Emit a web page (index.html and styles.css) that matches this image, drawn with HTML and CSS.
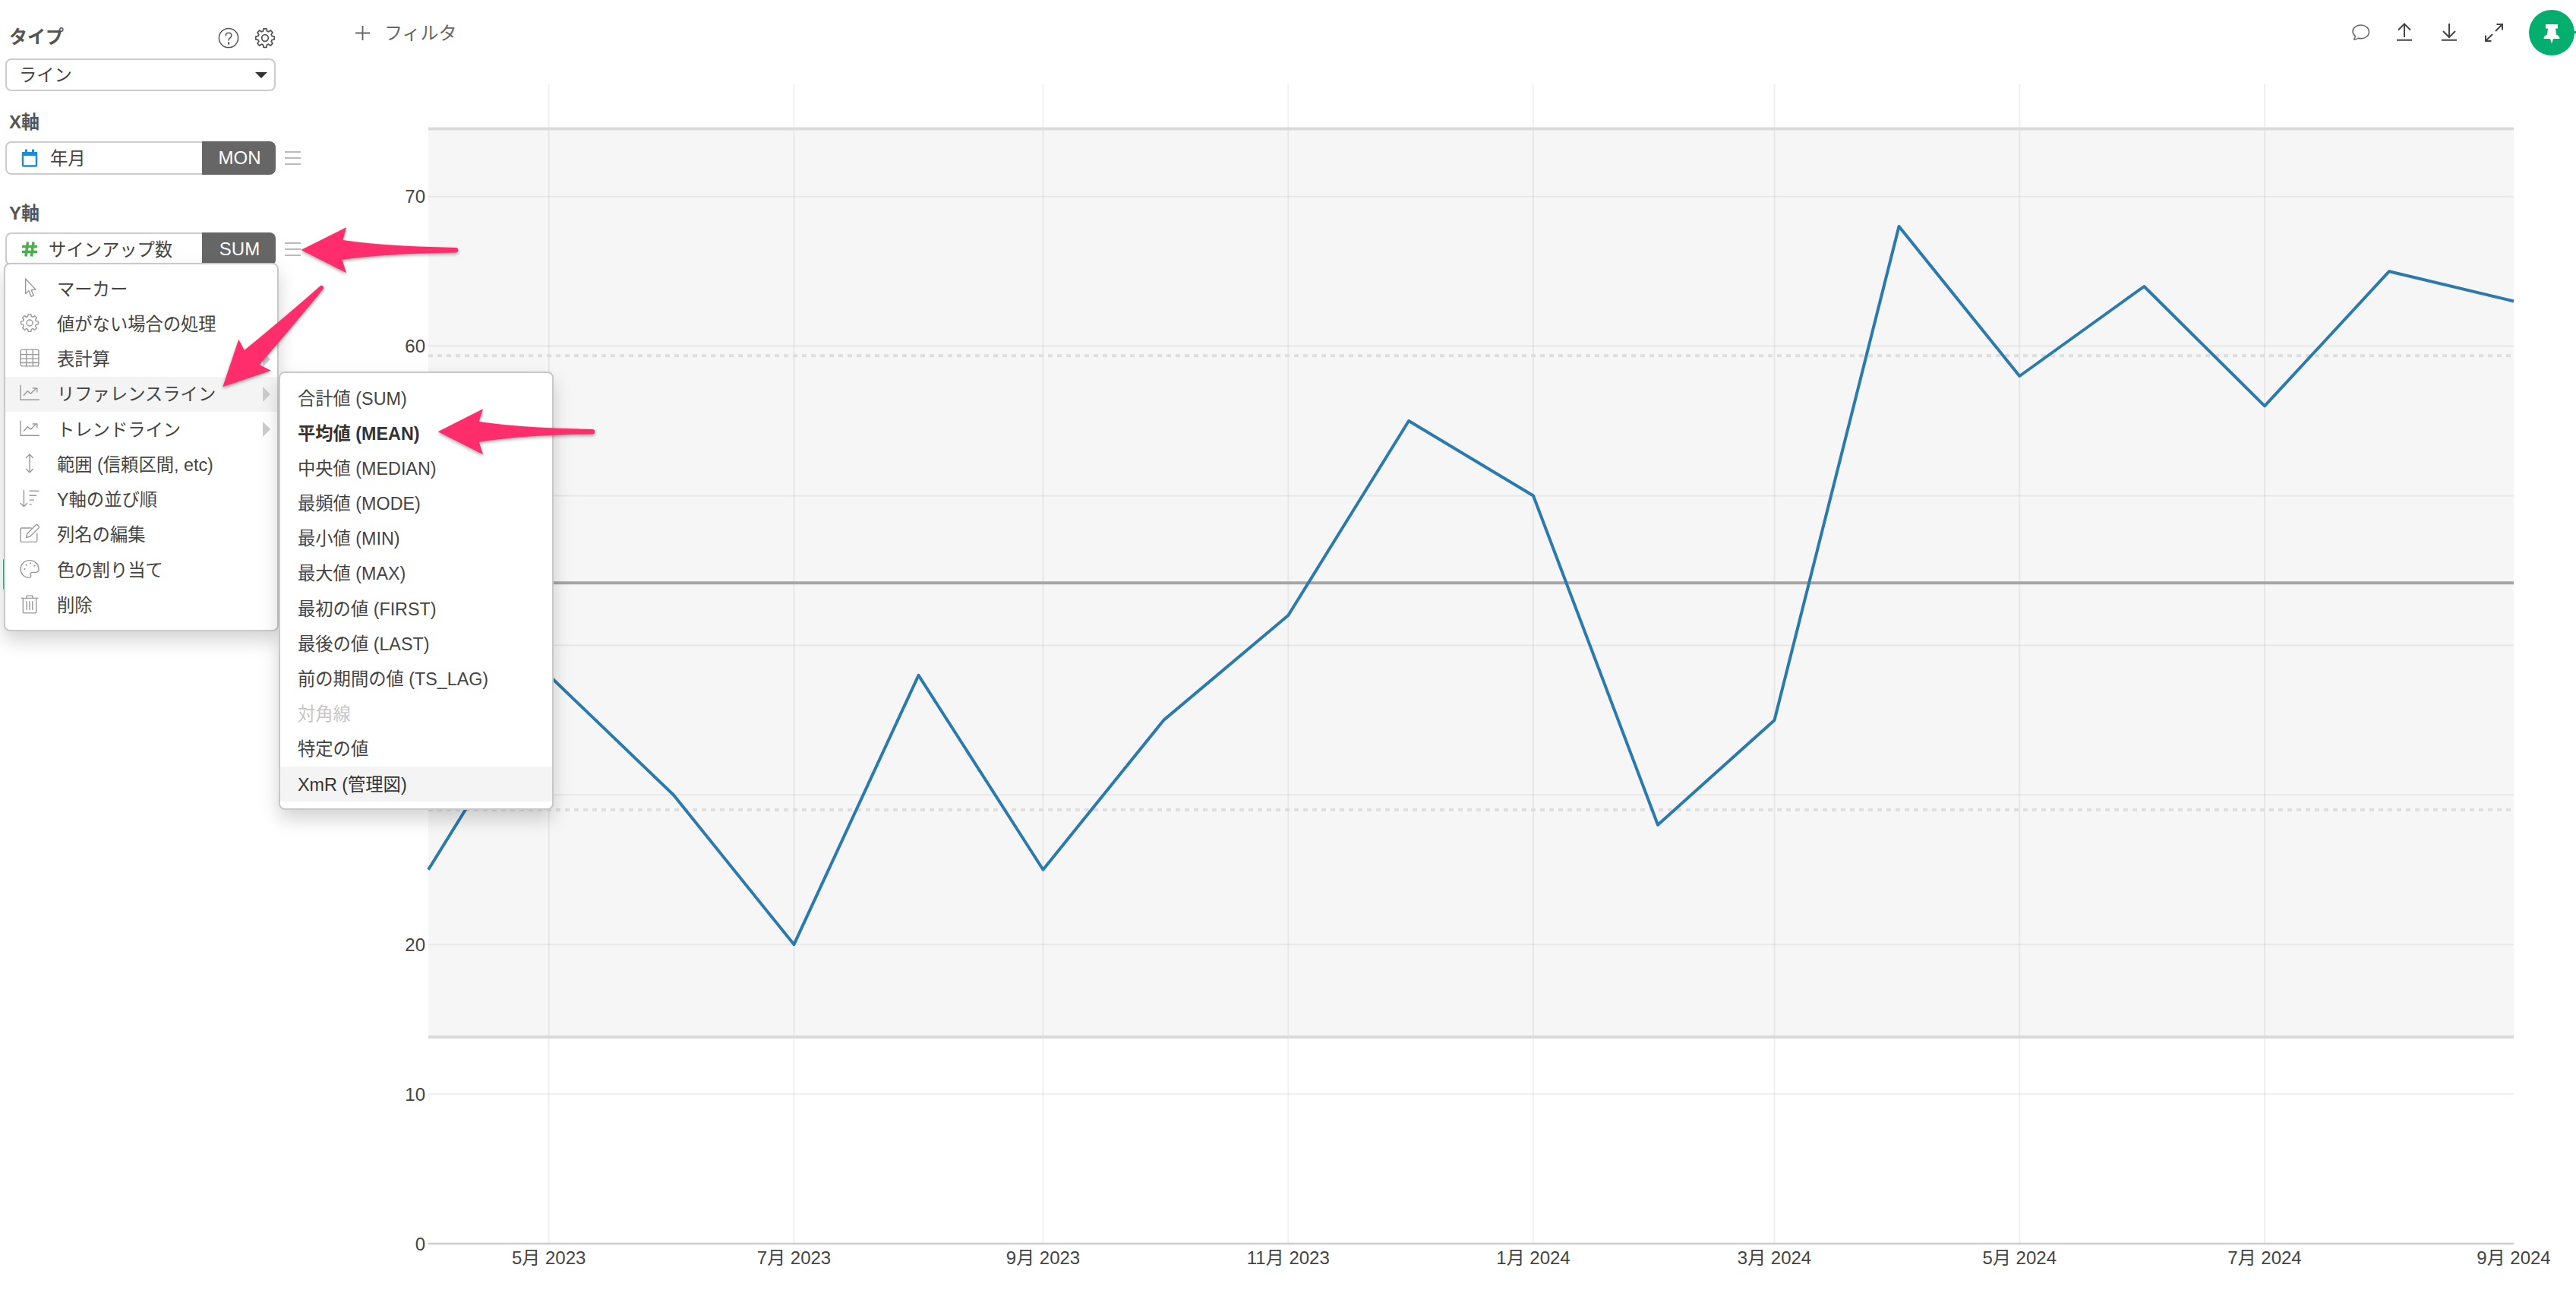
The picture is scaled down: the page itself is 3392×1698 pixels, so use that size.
FILE: index.html
```html
<!DOCTYPE html>
<html lang="ja">
<head>
<meta charset="utf-8">
<title>チャート</title>
<link rel="stylesheet" href="styles.css">
</head>
<body>
<div class="app">
  <aside class="sidebar">
    <div class="head head-type">
      <span>タイプ</span>
      <div class="head-icons">
        <svg class="head-icon" viewBox="0 0 28 28"><circle cx="14" cy="14" r="12.6"/><path d="M10.3 11c0-2.4 1.7-3.8 3.8-3.8s3.8 1.4 3.8 3.5c0 3.2-3.8 3.2-3.8 6.3"/><path class="dot" d="M14.1 20v1.8"/></svg>
        <svg class="head-icon" viewBox="0 0 24 24"><path d="M10.3 1.5h3.4l.5 2.8 1.7.7 2.3-1.6 2.4 2.4-1.6 2.3.7 1.7 2.8.5v3.4l-2.8.5-.7 1.7 1.6 2.3-2.4 2.4-2.3-1.6-1.7.7-.5 2.8h-3.4l-.5-2.8-1.7-.7-2.3 1.6-2.4-2.4 1.6-2.3-.7-1.7-2.8-.5v-3.4l2.8-.5.7-1.7-1.6-2.3 2.4-2.4 2.3 1.6 1.7-.7z"/><circle cx="12" cy="12" r="3.7"/></svg>
      </div>
    </div>
    <div class="select"><span class="select-text">ライン</span><i class="caret"></i></div>

    <div class="head">X軸</div>
    <div class="field-row">
      <div class="field">
        <div class="field-name">
          <svg class="field-icon" viewBox="0 0 22 24"><path class="cal" d="M2 7h18v14.5a1 1 0 0 1-1 1H3a1 1 0 0 1-1-1z"/><path class="cal-top" d="M1 4h20v5H1zM5 0.500h3v4H5zM14 0.500h3v4h-3z"/></svg>
          <span class="field-text">年月</span>
        </div>
        <div class="field-unit">MON</div>
      </div>
      <div class="burger"><i></i><i></i><i></i></div>
    </div>

    <div class="head">Y軸</div>
    <div class="field-row">
      <div class="field">
        <div class="field-name">
          <svg class="field-icon" viewBox="0 0 22 22"><path class="hash" d="M8.500 1.500 6 20.500M16 1.500 13.500 20.500M1 7.500h20M1 14.500h20"/></svg>
          <span class="field-text field-text-y">サインアップ数</span>
        </div>
        <div class="field-unit">SUM</div>
      </div>
      <div class="burger"><i></i><i></i><i></i></div>
    </div>
    <div class="behind-tab"></div>

    <ul class="menu menu-main">
      <li class="row"><svg class="mi" viewBox="0 0 24 24"><path d="M7 1v18l4-3.500 3 7 3-1.300-3-6.700 5.500-.5z"/></svg><span>マーカー</span></li>
      <li class="row"><svg class="mi" viewBox="0 0 24 24"><path d="M10.300 1.500h3.400l.5 2.800 1.700.7 2.300-1.600 2.400 2.400-1.600 2.300.7 1.700 2.800.5v3.400l-2.800.5-.7 1.700 1.600 2.300-2.400 2.400-2.300-1.600-1.700.7-.5 2.800h-3.400l-.5-2.800-1.700-.7-2.300 1.600-2.400-2.400 1.600-2.300-.7-1.700-2.800-.5v-3.400l2.800-.5.7-1.700-1.600-2.300 2.400-2.400 2.300 1.600 1.700-.7z"/><circle cx="12" cy="12" r="3.700"/></svg><span>値がない場合の処理</span></li>
      <li class="row"><svg class="mi" viewBox="0 0 24 24"><rect x="1" y="2" width="22" height="20" rx="2"/><path d="M1 8h22M1 13h22M1 18h22M8 2v20M16 2v20"/></svg><span>表計算</span><i class="chev"></i></li>
      <li class="row row-on"><svg class="mi" viewBox="0 0 24 24"><path d="M1 3v17.500h23"/><path d="M5 15l4.500-5 4 3 6-6"/><path d="M16 6.500h5V11"/></svg><span>リファレンスライン</span><i class="chev"></i></li>
      <li class="row"><svg class="mi" viewBox="0 0 24 24"><path d="M1 3v17.500h23"/><path d="M5 15l4.500-5 4 3 6-6"/><path d="M16 6.500h5V11"/></svg><span>トレンドライン</span><i class="chev"></i></li>
      <li class="row"><svg class="mi" viewBox="0 0 24 24"><path d="M12 1v22M8 5l4-4 4 4M8 19l4 4 4-4"/></svg><span>範囲 (信頼区間, etc)</span></li>
      <li class="row"><svg class="mi" viewBox="0 0 24 24"><path d="M5 2v20M1 18l4 4 4-4"/><path d="M12 3h11M12 8.500h8M12 14h5M12 19.500h2"/></svg><span>Y軸の並び順</span></li>
      <li class="row"><svg class="mi" viewBox="0 0 24 24"><path d="M21 12v9a1.500 1.500 0 0 1-1.500 1.500h-17A1.500 1.500 0 0 1 1 21V7a1.500 1.500 0 0 1 1.500-1.500H14"/><path d="M8 17l1-4.500L20.500 1 24 4.500 12.500 16z"/></svg><span>列名の編集</span></li>
      <li class="row"><svg class="mi" viewBox="0 0 24 24"><path d="M12 1.500C5.500 1.500 1 6.500 1 12c0 6 4.500 10.500 10 10.500 2.500 0 3-1.500 2.300-3-.8-1.800.2-3.500 2.200-3.500h4c2.300 0 3.500-1.500 3.500-4C23 6 18 1.500 12 1.500z"/><path class="dots" d="M6 12v.1M8 7v.1M13 5v.1M18 8v.1"/></svg><span>色の割り当て</span></li>
      <li class="row"><svg class="mi" viewBox="0 0 24 24"><path d="M2 5h20M8.500 5V2h7v3"/><path d="M4 5v17a1 1 0 0 0 1 1h14a1 1 0 0 0 1-1V5"/><path d="M8.500 9v10M12 9v10M15.500 9v10"/></svg><span>削除</span></li>
    </ul>

    <ul class="menu menu-sub">
      <li class="row">合計値 (SUM)</li>
      <li class="row row-bold">平均値 (MEAN)</li>
      <li class="row">中央値 (MEDIAN)</li>
      <li class="row">最頻値 (MODE)</li>
      <li class="row">最小値 (MIN)</li>
      <li class="row">最大値 (MAX)</li>
      <li class="row">最初の値 (FIRST)</li>
      <li class="row">最後の値 (LAST)</li>
      <li class="row">前の期間の値 (TS_LAG)</li>
      <li class="row row-off">対角線</li>
      <li class="row">特定の値</li>
      <li class="row row-on row-dark">XmR (管理図)</li>
    </ul>
  </aside>

  <main class="main">
    <header class="topbar">
      <div class="filter">
        <svg class="plus" viewBox="0 0 20 20"><path d="M10 0v20M0 10h20"/></svg>
        <span>フィルタ</span>
      </div>
      <div class="tools">
        <svg class="tool tool-thin" viewBox="0 0 26 26"><path d="M15 3c-6 0-11 3.400-11 8.500 0 2.500 1.300 4.500 3.300 6 .2 1.800-.5 3-1.800 4.500 2.500 0 4.200-.5 5.700-1.800 1.200.3 2.500.5 3.800.5 6 0 10.500-3.700 10.500-8.700S21 3 15 3z"/></svg>
        <svg class="tool" viewBox="0 0 26 26"><path d="M13 1.500V19M5 9.500l8-8 8 8M3 22.700h20"/></svg>
        <svg class="tool" viewBox="0 0 26 26"><path d="M13 1V19M5 11l8 8 8-8M3 22.700h20"/></svg>
        <svg class="tool" viewBox="0 0 26 26"><path d="M2 24l9-9M15 11l9-9M2 16.500V24h7.500M16.500 2H24v7.500"/></svg>
        <button class="pin" type="button"><svg class="pin-icon" viewBox="0 0 60 60"><path d="M22 19h16v5.500h-3l1 8c3 1 4.500 3 4.500 5.500h-8.500L30 44.500 28 38h-8.500c0-2.500 1.500-4.500 4.500-5.500l1-8h-3z"/></svg></button>
      </div>
    </header>

    <svg class="chart" viewBox="440 86 2952 1612">
      <rect class="band" x="564" y="169.500" width="2746" height="1195.500"/>
      <g class="grid">
        <path d="M564 1440.100H3310M564 1243.200H3310M564 1046.300H3310M564 849.400H3310M564 652.500H3310M564 455.600H3310M564 258.700H3310"/>
        <path d="M722.700 111V1637M1045.500 111V1637M1373.500 111V1637M1696.300 111V1637M2019 111V1637M2336.500 111V1637M2659.300 111V1637M2982 111V1637"/>
      </g>
      <path class="band-edge" d="M564 169.500H3310M564 1365H3310"/>
      <path class="ref-dots" d="M564 468.300H3310M564 1066H3310"/>
      <path class="ref-mean" d="M564 767.300H3310"/>
      <path class="axis" d="M564 1637H3310"/>
      <polyline class="series" points="564,1144.750 722.700,888.800 886.800,1046.300 1045.500,1243.200 1209.500,888.800 1373.500,1144.750 1532.300,947.900 1696.300,810 1855,554 2019,652.500 2183,1085.700 2336.500,947.900 2500.500,298 2659.300,495 2823.300,377 2982,534.400 3146,357.200 3310,396.500"/>
      <g class="y-labels">
        <text x="560" y="1646">0</text>
        <text x="560" y="1449">10</text>
        <text x="560" y="1252">20</text>
        <text x="560" y="1055">30</text>
        <text x="560" y="858">40</text>
        <text x="560" y="661">50</text>
        <text x="560" y="464">60</text>
        <text x="560" y="267">70</text>
      </g>
      <g class="x-labels">
        <text x="722.700" y="1664">5月 2023</text>
        <text x="1045.500" y="1664">7月 2023</text>
        <text x="1373.500" y="1664">9月 2023</text>
        <text x="1696.300" y="1664">11月 2023</text>
        <text x="2019" y="1664">1月 2024</text>
        <text x="2336.500" y="1664">3月 2024</text>
        <text x="2659.300" y="1664">5月 2024</text>
        <text x="2982" y="1664">7月 2024</text>
        <text x="3310" y="1664">9月 2024</text>
      </g>
    </svg>
  </main>

  <svg class="arrows" viewBox="0 0 3392 1698">
    <path d="M396.500 329 456 299.300 451.500 316C500 323 550 325 600 326a3 3 0 0 1 0 6.400C550 333 500 335 450.500 341.700L456 359.300z"/>
    <path d="M293.300 509.300 314.300 446.700 321.700 461C360 430 395 400 421 377a2.800 2.800 0 0 1 4.500 3.500C400 412 370 447 341.700 480L356.700 487.700z"/>
    <path d="M576.700 568.300 636 538.300 630.700 555C680 562 730 564 780 565a3 3 0 0 1 0 6.400C730 572 680 574 630.700 581.700L636 598.300z"/>
  </svg>
</div>
</body>
</html>
```

FILE: styles.css
```css
* { box-sizing: border-box; }

html, body {
  margin: 0;
  height: 100%;
  overflow: hidden;
  background: #fff;
}

body {
  font-family: "Liberation Sans", "Noto Sans CJK JP", sans-serif;
  font-size: 24px;
  color: #444;
}

.app {
  position: relative;
  display: flex;
  width: 3392px;
  height: 1698px;
}

/* sidebar */
.sidebar {
  position: relative;
  flex: 0 0 440px;
  padding: 32px 0 0 7px;
}

.head {
  width: 356px;
  height: 32px;
  margin-bottom: 11px;
  padding-left: 5px;
  line-height: 35px;
  font-weight: 700;
  color: #555;
}

.head-type {
  display: flex;
  justify-content: space-between;
  align-items: center;
  margin-bottom: 13px;
}

.head-icons {
  display: flex;
  gap: 20px;
  margin-top: 4px;
}

.head-icon {
  width: 28px;
  height: 28px;
  fill: none;
  stroke: #555;
  stroke-width: 1.500;
  stroke-linejoin: round;
  stroke-linecap: round;
}

.head-icon .dot { stroke-width: 2; }

.select {
  display: flex;
  justify-content: space-between;
  align-items: center;
  width: 356px;
  height: 43px;
  margin-bottom: 23px;
  padding: 0 9px 0 16px;
  border: 2px solid #ccc;
  border-radius: 8px;
}

.select-text { margin-top: -4px; font-size: 23.300px; }

.caret {
  width: 0;
  height: 0;
  border-left: 8px solid transparent;
  border-right: 8px solid transparent;
  border-top: 8px solid #333;
}

.field-row {
  display: flex;
  align-items: center;
  gap: 12px;
  margin-bottom: 33px;
}

.field {
  display: flex;
  width: 356px;
  height: 44px;
}

.field-name {
  display: flex;
  align-items: center;
  flex: 1;
  gap: 16px;
  padding-left: 19px;
  border: 2px solid #ccc;
  border-right: 0;
  border-radius: 8px 0 0 8px;
}

.field-icon {
  flex: none;
  width: 22px;
  height: 24px;
}

.field-text {
  margin-top: -3px;
  font-size: 23.300px;
}

.field-text-y { margin-left: -2px; }

.cal {
  fill: #fff;
  stroke: #1a8fd8;
  stroke-width: 2.500;
}

.cal-top { fill: #1a8fd8; }

.hash {
  fill: none;
  stroke: #4cae4c;
  stroke-width: 3.500;
}

.field-unit {
  flex: 0 0 97px;
  padding-left: 2px;
  border-radius: 0 8px 8px 0;
  background: #666;
  color: #fff;
  line-height: 44px;
  text-align: center;
}

.burger {
  display: flex;
  flex-direction: column;
  gap: 6px;
  width: 21px;
}

.burger i {
  height: 2px;
  background: #bbb;
}

.behind-tab {
  position: absolute;
  left: 4px;
  top: 735px;
  width: 6px;
  height: 42px;
  border-radius: 3px 0 0 3px;
  background: #3fae84;
}

/* menus */
.menu {
  position: absolute;
  width: 362px;
  margin: 0;
  list-style: none;
  border: 2px solid #c8c8c8;
  border-radius: 8px;
  background: #fff;
  box-shadow: 0 12px 24px rgba(0, 0, 0, .175);
  font-size: 23.300px;
}

.menu-main {
  left: 5px;
  top: 346px;
  padding: 9px 0;
}

.menu-sub {
  left: 367px;
  top: 489px;
  padding: 9.500px 0;
}

.menu-main .row {
  display: flex;
  align-items: center;
  height: 46.250px;
  padding: 0 9px 3px 19px;
}

.menu-sub .row {
  height: 46.200px;
  padding-left: 23px;
  line-height: 48px;
  white-space: nowrap;
}

.row-on { background: #f4f4f4; }
.row-bold { font-weight: 700; color: #333; }
.row-off { color: #c6c6c6; }
.row-dark { color: #333; }

.mi {
  flex: none;
  width: 26px;
  height: 26px;
  margin-right: 23px;
  fill: none;
  stroke: #999;
  stroke-width: 1.300;
  stroke-linejoin: round;
  stroke-linecap: round;
}

.mi .dots { stroke-width: 2; }

.chev {
  width: 0;
  height: 0;
  margin: 3px 0 0 auto;
  border-top: 10px solid transparent;
  border-bottom: 10px solid transparent;
  border-left: 10px solid #ccc;
}

/* main */
.main {
  display: flex;
  flex: 1;
  flex-direction: column;
  min-width: 0;
}

.topbar {
  display: flex;
  flex: 0 0 86px;
  justify-content: space-between;
  align-items: center;
  padding: 0 2px 0 28px;
}

.filter {
  display: flex;
  align-items: center;
  gap: 19px;
  color: #666;
}

.filter span { margin-top: -4px; }

.plus {
  width: 19px;
  height: 19px;
  fill: none;
  stroke: #666;
  stroke-width: 2;
}

.tools {
  display: flex;
  align-items: center;
  gap: 33px;
}

.tool {
  width: 26px;
  height: 26px;
  fill: none;
  stroke: #444;
  stroke-width: 2;
}

.tool-thin {
  stroke: #666;
  stroke-width: 1.500;
  stroke-linejoin: round;
}

.pin {
  position: relative;
  width: 60px;
  height: 60px;
  padding: 0;
  border: 0;
  border-radius: 50%;
  background: #04ae6f;
}

.pin::after {
  content: "";
  position: absolute;
  right: -2px;
  top: 28px;
  width: 2px;
  height: 3px;
  background: #04ae6f;
}

.pin-icon {
  display: block;
  width: 60px;
  height: 60px;
  fill: #fff;
}

.chart {
  display: block;
  flex: 1;
  width: 100%;
  min-height: 0;
}

.band { fill: #f6f6f6; }

.grid path {
  fill: none;
  stroke: #000;
  stroke-opacity: .06;
  stroke-width: 2;
}

.band-edge {
  fill: none;
  stroke: #d9dada;
  stroke-width: 4;
}

.ref-dots {
  fill: none;
  stroke: #dedede;
  stroke-width: 4;
  stroke-dasharray: 6 6;
}

.ref-mean {
  fill: none;
  stroke: #a5a6a5;
  stroke-width: 4;
}

.axis {
  fill: none;
  stroke: #ccc;
  stroke-width: 2.500;
}

.series {
  fill: none;
  stroke: #2a7ab0;
  stroke-width: 4;
  stroke-linejoin: round;
}

.y-labels text,
.x-labels text {
  fill: #444;
  font-size: 24px;
}

.y-labels text { text-anchor: end; }
.x-labels text { text-anchor: middle; }

.arrows {
  position: absolute;
  inset: 0;
  width: 3392px;
  height: 1698px;
  fill: #ff2d6c;
  filter: drop-shadow(0 2px 2px rgba(0, 0, 0, .35));
  pointer-events: none;
}
```
